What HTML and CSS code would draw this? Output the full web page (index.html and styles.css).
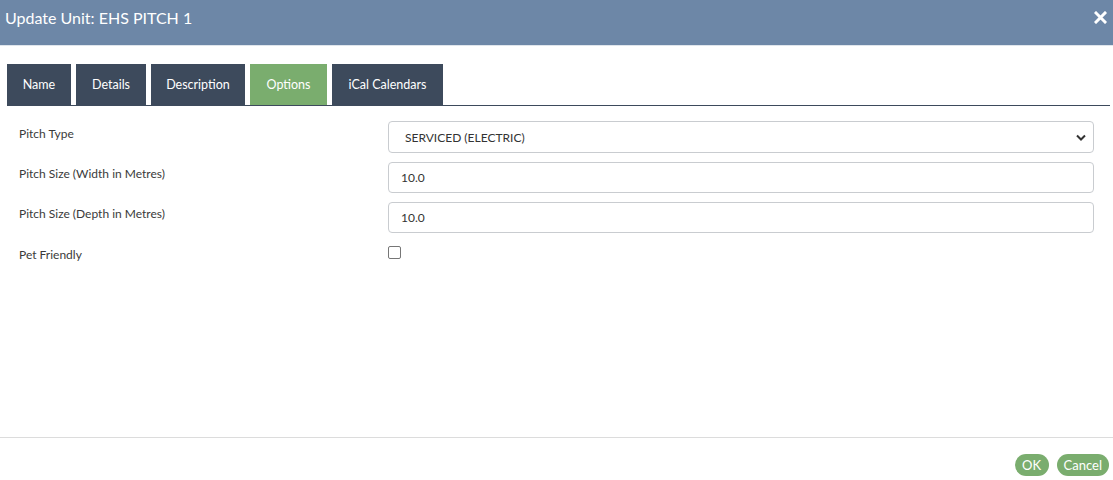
FILE: index.html
```html
<!DOCTYPE html>
<html>
<head>
<meta charset="utf-8">
<link rel="stylesheet" href="styles.css">
</head>
<body>
<div class="dialog">
  <div class="titlebar">
    <span class="title">Update Unit: EHS PITCH 1</span>
    <svg class="close" width="13" height="13" viewBox="0 0 13 13"><path d="M2 2 L11 11 M11 2 L2 11" stroke="#fff" stroke-width="3" stroke-linecap="square"/></svg>
  </div>
  <div class="body">
    <div class="tabs">
      <div class="tab">Name</div>
      <div class="tab">Details</div>
      <div class="tab">Description</div>
      <div class="tab active">Options</div>
      <div class="tab">iCal Calendars</div>
    </div>
    <div class="form">
      <div class="row row-select">
        <label class="lbl">Pitch Type</label>
        <div class="ctrl select"><span>SERVICED (ELECTRIC)</span>
          <svg width="10" height="7" viewBox="0 0 10 7"><path d="M1 1.5 L5 5.5 L9 1.5" fill="none" stroke="#333" stroke-width="2"/></svg>
        </div>
      </div>
      <div class="row">
        <label class="lbl">Pitch Size (Width in Metres)</label>
        <div class="ctrl input">10.0</div>
      </div>
      <div class="row">
        <label class="lbl">Pitch Size (Depth in Metres)</label>
        <div class="ctrl input">10.0</div>
      </div>
      <div class="row check-row">
        <label class="lbl">Pet Friendly</label>
        <div class="checkbox"></div>
      </div>
    </div>
  </div>
  <div class="footer">
    <button class="btn btn-ok">OK</button>
    <button class="btn">Cancel</button>
  </div>
</div>
</body>
</html>
```
FILE: styles.css
```css
html, body {
  margin: 0;
  padding: 0;
  background: #fff;
  font-family: Lato, "Noto Sans", "Liberation Sans", sans-serif;
}
.dialog {
  width: 1113px;
  height: 480px;
  display: flex;
  flex-direction: column;
}
.titlebar {
  height: 45px;
  background: #6d87a7;
  border-bottom: 1px solid #dfe5ec;
  display: flex;
  align-items: center;
  justify-content: space-between;
  padding: 0 6px 0 5px;
}
.title {
  color: #fff;
  font-size: 16px;
  margin-top: -11px;
}
.close {
  margin-top: -10px;
}
.body {
  flex: 1;
  padding-top: 18px;
}
.tabs {
  display: flex;
  gap: 5px;
  margin-left: 7px;
  width: 1103px;
  border-bottom: 1px solid #3d4a5c;
}
.tab {
  height: 41px;
  background: #3d4a5c;
  color: #fff;
  font-size: 12.5px;
  display: flex;
  align-items: center;
  justify-content: center;
}
.tab:nth-child(1) { width: 64px; }
.tab:nth-child(2) { width: 70px; }
.tab:nth-child(3) { width: 94px; }
.tab:nth-child(4) { width: 77px; }
.tab:nth-child(5) { width: 111px; }
.tab.active {
  background: #7aad6e;
}
.form {
  padding: 15px 0 0 19px;
  display: flex;
  flex-direction: column;
  gap: 9px;
}
.row {
  display: flex;
  align-items: flex-start;
  height: 31px;
}
.row-select {
  height: 32px;
}
.lbl {
  width: 369px;
  font-size: 12px;
  line-height: 15px;
  color: #3a3a3a;
  margin-top: 4px;
}
.row-select .lbl {
  margin-top: 5px;
}
.ctrl {
  width: 706px;
  height: 31px;
  box-sizing: border-box;
  border: 1px solid #c9ccd0;
  border-radius: 4px;
  font-size: 12px;
  color: #333;
  display: flex;
  align-items: center;
}
.input {
  padding-left: 12px;
}
.select {
  padding: 0 7px 0 16px;
  justify-content: space-between;
  height: 32px;
}
.check-row {
  height: auto;
}
.check-row .lbl {
  margin-top: 5px;
}
.checkbox {
  width: 13px;
  height: 13px;
  box-sizing: border-box;
  border: 1px solid #767676;
  border-radius: 2px;
  margin-top: 4px;
}
.footer {
  border-top: 1px solid #dcdcdc;
  height: 43px;
  display: flex;
  justify-content: flex-end;
  align-items: flex-start;
  gap: 8px;
  padding: 16px 4px 0 0;
  box-sizing: border-box;
}
.btn {
  height: 22px;
  border: none;
  border-radius: 11px;
  background: #7aad6e;
  color: #fff;
  font-family: inherit;
  font-size: 13px;
  padding: 0 7px;
}
.btn-ok {
  min-width: 34px;
}
```
